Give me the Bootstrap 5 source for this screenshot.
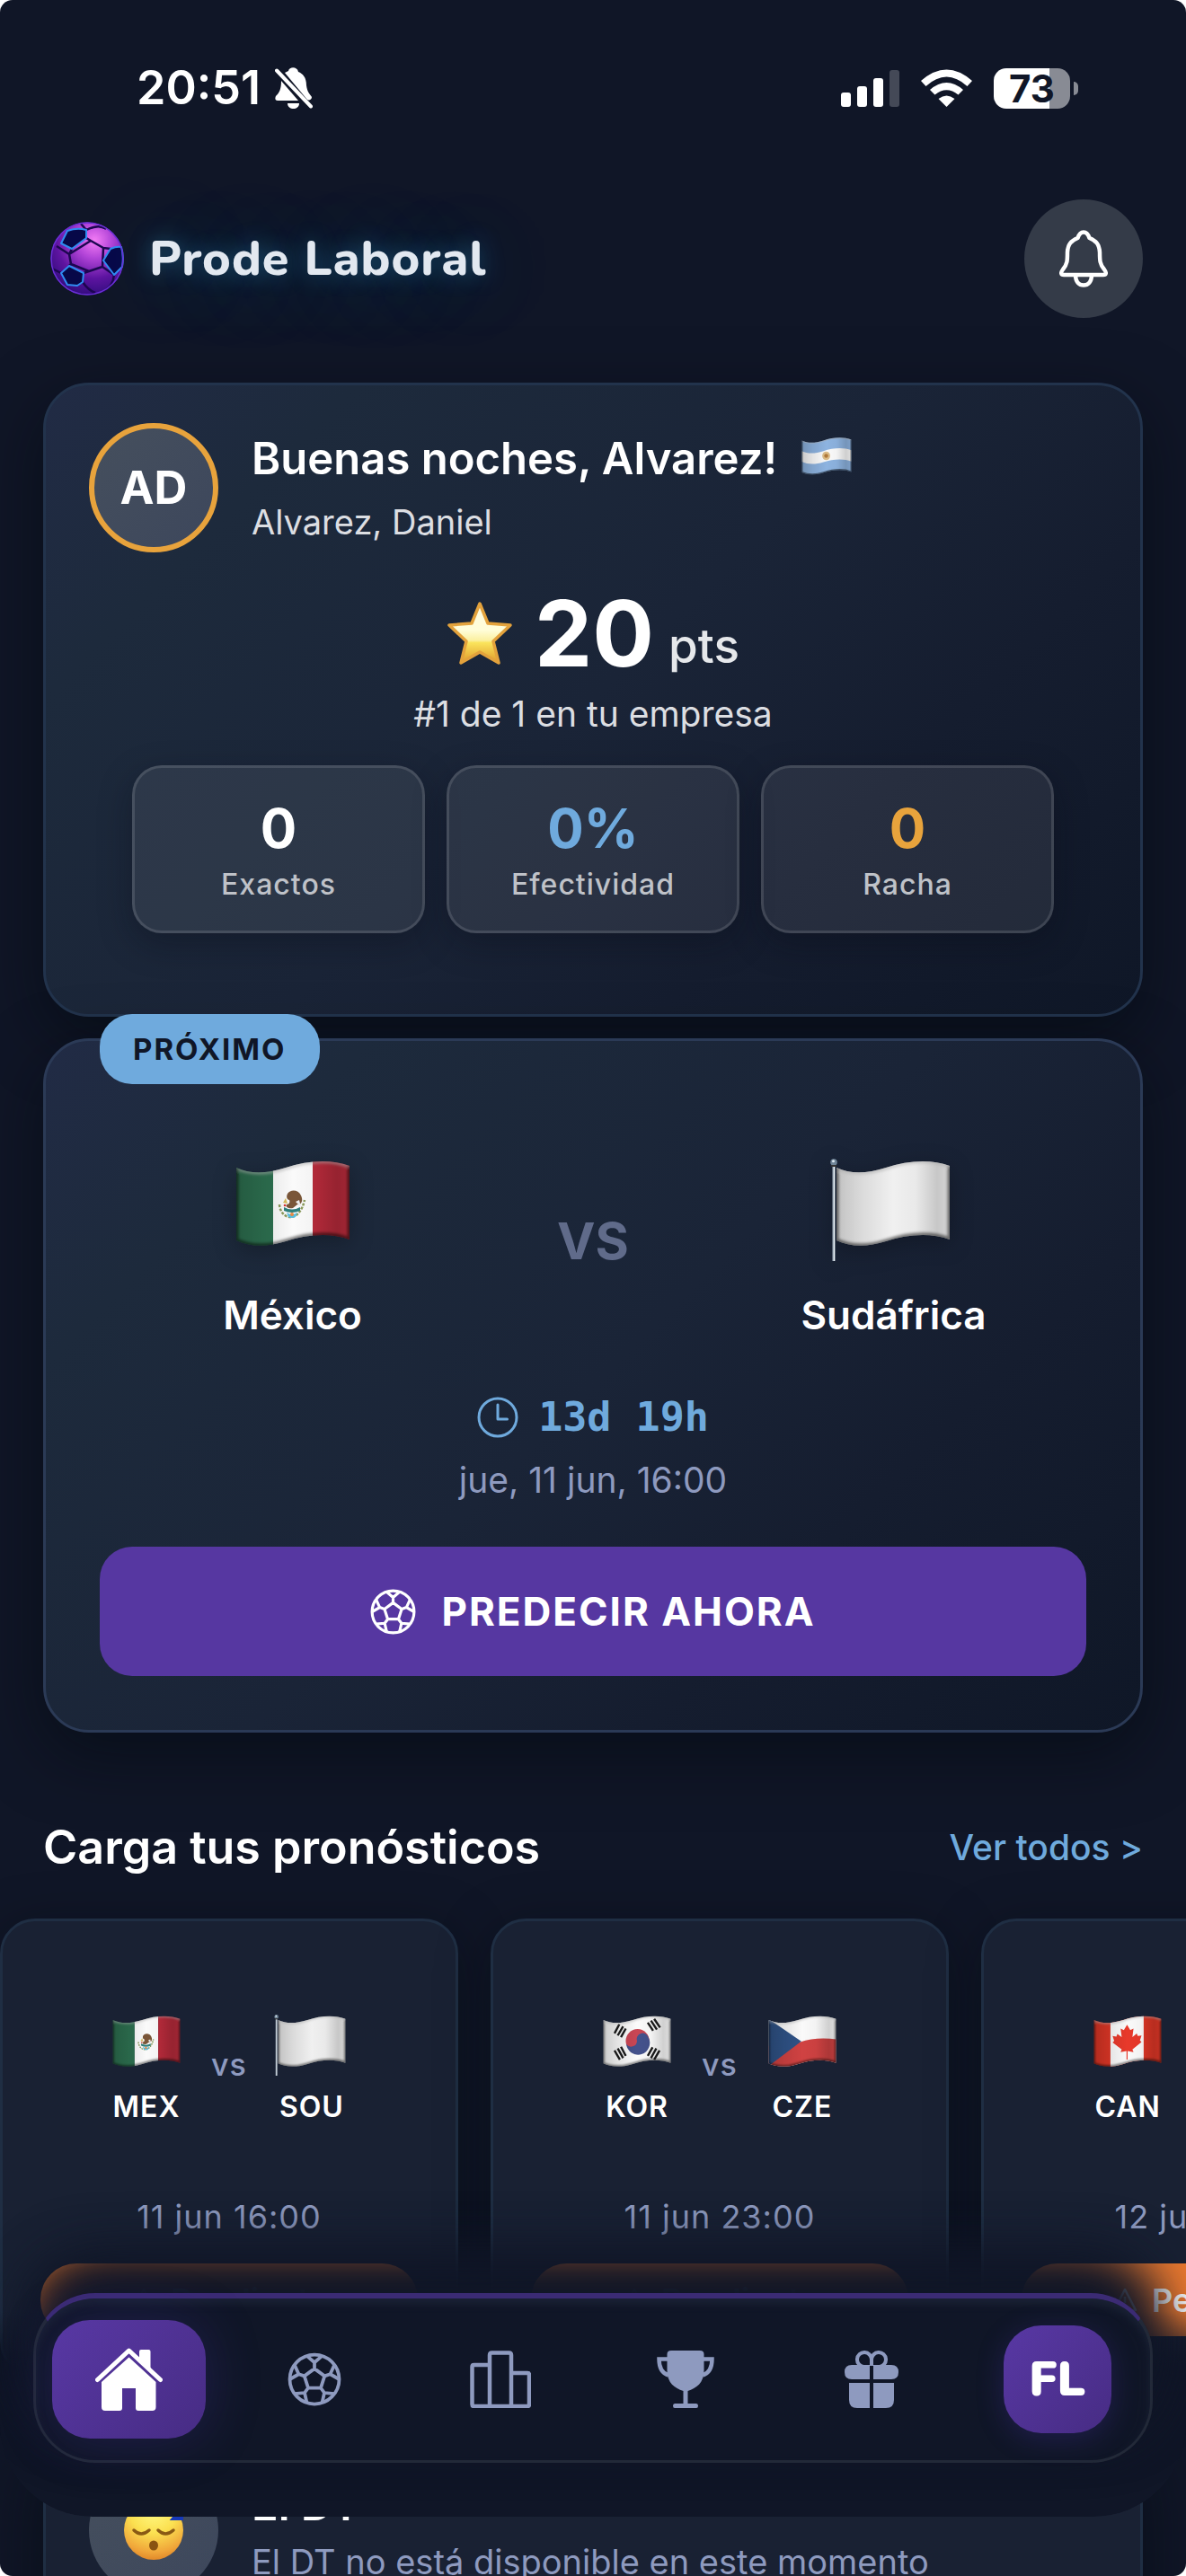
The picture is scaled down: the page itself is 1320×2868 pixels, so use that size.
<!DOCTYPE html>
<html lang="es">
<head>
<meta charset="utf-8">
<meta name="viewport" content="width=device-width, initial-scale=1">
<title>Prode Laboral</title>
<link href="https://cdn.jsdelivr.net/npm/bootstrap@5.3.0/dist/css/bootstrap.min.css" rel="stylesheet">
<style>
:root{--night:#101627;--sky:#6faadd;--amber:#e8a33c;--muted:#8e9abf;--violet:#5637a1}
body{background:#fff;font-family:Inter,"Liberation Sans",sans-serif;color:#fff}
.app{background:var(--night);border-radius:14px}
.status{height:196px;padding:0 120px 0 152px;font-size:52px;font-weight:600;line-height:60px}
.batt{width:85px;height:45px;border-radius:14px;background:linear-gradient(to right,#fff 73%,#888b94 73%);color:var(--night);font-size:42px;font-weight:700;line-height:45px}
.batt-tip{width:5px;height:15px;border-radius:0 8px 8px 0;background:#888b94}
.topbar{padding:26px 48px 0 56px}
.brand-name{font-family:Nunito,Lato,sans-serif;font-weight:800;font-size:54px;line-height:72px;letter-spacing:1px;color:#e2e8f0;text-shadow:0 0 24px rgba(56,189,248,.35),0 6px 90px rgba(56,189,248,.35)}
.bell-btn{width:132px;height:132px;background:#343b48}
.panel{border:3px solid #22334c;border-radius:51px;background:linear-gradient(135deg,#212b45 0%,#1d2a3c 18%,#1a2437 50%,#151d2f 72%,#0f1727 100%);box-shadow:0 24px 72px rgba(0,8,12,.5)}
.hero{margin-top:72px;padding:42px 48px 90px}
.avatar{width:144px;height:144px;flex:none;background:linear-gradient(135deg,#454f5d,#3d475c);font-size:51px;font-weight:700}
.avatar-ring{border:6px solid var(--amber)}
.who{margin-left:37px}
.greet{font-size:49px;line-height:60px;font-weight:600}
.body-sub{font-size:38px;line-height:48px}
.who .body-sub{margin-top:16px}
.body-txt{font-size:39px;line-height:48px}
.dim{color:#dcdee2}
.score{height:108px;margin-top:36px;gap:16px}
.score-num{font-size:102px;line-height:108px;font-weight:700}
.score-unit{font-size:53px;line-height:80px;font-weight:500;color:#e6e8eb}
.stats{margin:33px 48px 0;gap:24px}
.stat{border:3px solid rgba(255,255,255,.12);border-radius:33px;background:rgba(255,255,255,.08);box-shadow:0 12px 36px rgba(10,12,24,.35);padding:31px 0 27px}
.stat-num{font-size:60px;line-height:72px;font-weight:700}
.stat-lbl{font-size:32px;line-height:48px;font-weight:500;letter-spacing:1px;color:#bfc2c8;padding-top:3px}
.next{margin-top:24px;padding:131px 60px 60px;border-color:#2b3a56}
.chip{top:-30px;left:60px;background:var(--sky);color:var(--night);border-radius:36px;padding:0 37px;font-size:33px;line-height:78px;font-weight:700;letter-spacing:2px}
.flag-lg{width:140px;height:114px;filter:drop-shadow(0 6px 12px rgba(0,0,0,.25))}
.flag-sm{width:84px;height:68px}
.team{font-size:44px;line-height:60px;margin-top:30px;font-weight:600}
.versus{font-size:57px;line-height:60px;font-weight:700;color:#606b8a;padding:0 80px 20px}
.count{font-family:"DejaVu Sans Mono",monospace;font-weight:700;font-size:45px;line-height:60px;color:var(--sky);margin-top:54px;gap:22px}
.when{color:var(--muted);margin-top:16px}
.cta{height:144px;margin-top:50px;border-radius:36px;background:var(--violet);color:#fff;font-size:44px;font-weight:700;letter-spacing:2px;gap:28px;border:0}
.sec-head{margin:92px 48px 43px}
.sec-title{font-size:52px;line-height:72px;font-weight:600}
.sec-link{font-size:39px;font-weight:500;color:var(--sky)}
.strip{gap:36px}
.fixture{width:510px;border:3px solid #1f2e43;border-radius:39px;background:#192133;box-shadow:0 12px 60px rgba(0,8,12,.35);padding:104px 42px 42px}
.code{font-size:32px;line-height:42px;margin-top:14px;font-weight:600;letter-spacing:1px}
.vs-sm{font-size:34px;line-height:36px;font-weight:500;color:var(--muted);padding-bottom:12px;letter-spacing:1px}
.pair{gap:30px}
.date-sm{font-size:36px;line-height:48px;color:var(--muted);margin-top:77px;letter-spacing:1px}
.pend{height:81px;margin-top:28px;border:0;border-radius:40px;background:#ec7a30;color:#fff;font-size:36px;font-weight:600;gap:15px}
.coach{margin-top:54px;padding:42px 48px 60px;background:#192133;border-color:#1f2e43}
.coach .when{margin-top:9px}
.dock{padding:0 37px 60px;border-radius:0 0 103px 103px;background:linear-gradient(to bottom,rgba(16,22,39,0) 20px,var(--night) 80px);clip-path:inset(-300px 0 0 0 round 0 0 103px 103px);bottom:66px!important}
.pill{height:189px;border:3px solid #222938;border-top:6px solid #3b2b74;border-radius:69px;background:var(--night);box-shadow:0 -42px 60px var(--night),0 -30px 60px var(--night),inset 0 6px 9px #1a2235}
.tab-home{width:171px;height:132px;border-radius:42px;background:linear-gradient(135deg,#5838a4,#472c84);box-shadow:0 0 60px rgba(80,56,190,.25)}
.tab-me{width:120px;height:120px;border-radius:42px;background:linear-gradient(135deg,#5838a4,#472c84);box-shadow:0 6px 30px rgba(80,56,190,.25);font-family:Nunito,Lato,sans-serif;font-size:54px;font-weight:900}
.tab-ico{color:var(--muted)}
svg{flex:none;display:block}
</style>
</head>
<body>
<svg width="0" height="0" class="position-absolute" aria-hidden="true">
<defs>
<clipPath id="cloth"><path d="M7 10C22 17 40 17 62 10C86 2 112 0 133 8V90C112 82 86 84 62 92C40 99 22 98 7 91Z"/></clipPath>
<linearGradient id="fold" x1="0" x2="1" y1="0" y2="0"><stop offset="0" stop-color="#000" stop-opacity=".22"/><stop offset=".25" stop-color="#000" stop-opacity=".09"/><stop offset=".5" stop-color="#000" stop-opacity="0"/><stop offset=".68" stop-color="#000" stop-opacity=".03"/><stop offset=".85" stop-color="#000" stop-opacity=".17"/><stop offset="1" stop-color="#000" stop-opacity=".08"/></linearGradient>
<filter id="soft"><feGaussianBlur stdDeviation="1.6"/></filter>
<symbol id="shade" viewBox="0 0 140 114"><g clip-path="url(#cloth)"><rect width="140" height="114" fill="url(#fold)"/><g filter="url(#soft)" fill="none" stroke-width="5"><path d="M7 10C22 17 40 17 62 10C86 2 112 0 133 8" stroke="#aaa" stroke-opacity=".5"/><path d="M133 8V90C112 82 86 84 62 92C40 99 22 98 7 91V10" stroke="#000" stroke-opacity=".5"/></g></g></symbol>
<symbol id="f-mx" viewBox="0 0 140 114"><g clip-path="url(#cloth)"><path fill="#2d7050" d="M0 0h48v114H0z"/><path fill="#fafafa" d="M48 0h44v114H48z"/><path fill="#b52a3a" d="M92 0h48v114H92z"/><path d="M55 51c1 17 22 22 28-5" fill="none" stroke="#8b9a5b" stroke-width="2.5" stroke-dasharray="3 1.5"/><path d="M64 39c3-5 12-5 15 2c3 6 0 11-4 10l-5 4c-4 1-9-1-7-4c3 0 4-3 3-5c-2 0-4-3-2-7z" fill="#7a5638"/><path d="M62 44l-3 5 5 1z" fill="#d8bd5a"/><path d="M73 48l6 6-2-8z" fill="#eee"/><path d="M60 54q9 5 18 0v4q-9 4-18 0z" fill="#2e7f7c"/><path d="M63 60q6 4 12 0l-2 5q-4 2-8 0z" fill="#58bde0"/><circle cx="69" cy="62" r="2" fill="#e98842"/><circle cx="61" cy="52" r="1.3" fill="#d33"/></g><use href="#shade"/></symbol>
<symbol id="f-white" viewBox="0 0 140 114"><g clip-path="url(#cloth)"><path fill="#f0f0f0" d="M0 0h140v114H0z"/></g><use href="#shade"/><path d="M2.500 7h3v107h-3z" fill="#a9b6c3"/><path d="M4 7h1v107H4z" fill="#eef4f8"/><circle cx="4" cy="4" r="3.800" fill="#6f8497"/><circle cx="3.500" cy="2.800" r="1.500" fill="#dfeaf2"/><path d="M1 7h6v2H1z" fill="#333"/></symbol>
<symbol id="f-ar" viewBox="0 0 140 114"><g clip-path="url(#cloth)"><path fill="#8db3e0" d="M0 0h140v114H0z"/><path fill="#fafafa" d="M7 37C22 44 40 44 62 37C86 29 112 27 133 35V63C112 55 86 57 62 65C40 72 22 71 7 64Z"/><ellipse cx="69" cy="49" rx="10" ry="11" fill="#dcbc87"/><circle cx="69" cy="49" r="5" fill="#b0793a"/></g><use href="#shade"/></symbol>
<symbol id="f-kr" viewBox="0 0 140 114"><g clip-path="url(#cloth)"><path fill="#fbfbfb" d="M0 0h140v114H0z"/><circle cx="71" cy="49" r="22" fill="#c94654"/><path d="M50 55a11 11 0 0 0 20-6a11 11 0 0 1 21-7a22 22 0 1 1-41 13z" fill="#44528c"/><g stroke="#1b1b1b" stroke-width="4"><path d="M28 35l9-17M34 39l10-17M40 42l9-16M90 15l10 15M96 11l11 17M102 8l11 16M28 67l10 17M34 63l10 18M40 60l9 17M90 77l9-16M96 81l10-18M102 84l10-17"/></g></g><use href="#shade"/></symbol>
<symbol id="f-cz" viewBox="0 0 140 114"><g clip-path="url(#cloth)"><path fill="#fafafa" d="M0 0h140v114H0z"/><path fill="#d04242" d="M7 58C22 59 40 58 66 51C86 44 112 42 140 47V114H7Z"/><path fill="#2f5286" d="M7 8L68 50L7 96Z"/></g><use href="#shade"/></symbol>
<symbol id="f-ca" viewBox="0 0 140 114"><g clip-path="url(#cloth)"><path fill="#dd3626" d="M0 0h140v114H0z"/><path fill="#fafafa" d="M38 0h62v114H38z"/><path fill="#e8392b" d="M69 19l6 10 6-3-2 16 8-7 2 5 7-1-3 9 3 3-17 14 2 5-11-2v16h-2V68l-11 2 2-5-17-13 3-3-3-9 7 1 2-5 8 6-2-16 6 3z"/></g><use href="#shade"/></symbol>
<symbol id="ball" viewBox="0 0 48 48"><g transform="translate(24 24)" fill="none" stroke="currentColor" stroke-width="3" stroke-linejoin="round"><circle r="22"/><path d="M0-9.500L9-2.900 5.600 7.700H-5.600L-9-2.900ZM0-9.500V-15M9-2.900L14-4.600M5.600 7.700L8.800 12M-5.600 7.700L-8.800 12M-9-2.900L-14-4.600M-6.800-20.900L0-15 6.800-20.900M17.800-12.900L14-4.600 22 0M17.800 12.900L8.800 12 6.800 20.900M-6.800 20.900L-8.800 12-17.800 12.900M-22 0L-14-4.600-17.800-12.900"/></g></symbol>
<symbol id="warn" viewBox="0 0 30 30"><path d="M15 3L27 26H3zM15 11v7M15 21v2" fill="none" stroke="currentColor" stroke-width="2.500" stroke-linejoin="round"/></symbol>
<radialGradient id="orb" cx=".6" cy=".25" r=".8"><stop offset="0" stop-color="#f57df5"/><stop offset=".3" stop-color="#b345d8"/><stop offset=".65" stop-color="#5e14a0"/><stop offset="1" stop-color="#2c0c78"/></radialGradient>
<linearGradient id="gold" x1="0" x2="0" y1="0" y2="1"><stop offset="0" stop-color="#fffbe0"/><stop offset=".45" stop-color="#fffdd8"/><stop offset=".62" stop-color="#fbf0a0"/><stop offset=".66" stop-color="#fae45c"/><stop offset="1" stop-color="#e09a2a"/></linearGradient>
<radialGradient id="face" cx=".5" cy=".15" r=".9"><stop offset="0" stop-color="#fffb86"/><stop offset=".45" stop-color="#fbe050"/><stop offset=".8" stop-color="#f0a63a"/><stop offset="1" stop-color="#dd7f24"/></radialGradient>
</defs>
</svg>

<div class="app vh-100 overflow-hidden position-relative">
  <div class="status d-flex align-items-center justify-content-between">
    <div class="d-flex align-items-center gap-3">
      <span>20:51</span>
      <svg width="42" height="46" viewBox="0 0 42 46" fill="#fff"><path d="M11 6L36 36C38 37 41 36 41 33C38 29 36 27 35 20C35 11 31 7 26 5C25-1 16-1 15 4Z"/><path d="M7 15L26 37H3C0 37 0 34 1 32C5 28 7 24 7 15Z"/><path d="M14 40h13c0 8-13 8-13 0z"/><path d="M2 3.500L40 43.500" stroke="#fff" stroke-width="4" stroke-linecap="round"/></svg>
    </div>
    <div class="d-flex align-items-center">
      <svg width="65" height="42" viewBox="0 0 65 42" fill="#fff"><rect y="26" width="11" height="16" rx="3"/><rect x="18" y="19" width="11" height="23" rx="3"/><rect x="36" y="10" width="11" height="32" rx="3"/><rect x="54" y="1" width="11" height="41" rx="3" fill="#444957"/></svg>
      <svg class="ms-4" width="57" height="42" viewBox="0 0 57 42" fill="#fff"><path d="M0 13Q28.500-12 57 13L51.500 19Q28.500-2 5.500 19Z"/><path d="M10 23Q28.500 7 47 23L41.500 28.500Q28.500 18 15.500 28.500Z"/><path d="M19.500 33Q28.500 26 37.500 33L28.500 42Z"/></svg>
      <div class="batt text-center ms-4">73</div><div class="batt-tip ms-1"></div>
    </div>
  </div>

  <header class="topbar d-flex align-items-center justify-content-between">
    <div class="d-flex align-items-center gap-4">
      <svg width="82" height="82" viewBox="0 0 82 82"><circle cx="41" cy="41" r="40.500" fill="url(#orb)"/><g fill="none" stroke="#1c0750" stroke-width="2.500" stroke-linejoin="round"><path d="M21 36L45 21 59 29 58 50 43 55 23 47ZM45 21L40 18M59 29L67 30M58 50L71 59M43 55L37 57M23 47L21 49M21 36L24 30M21 36L7 27M40 9Q54 2 62 8M71 59Q70 72 58 78M36 67Q42 76 50 79M12 57L2 52M40 9L34 2"/></g><g fill="#070848" stroke="#2f8cf2" stroke-width="2" stroke-linejoin="round"><path d="M12 24L19 10Q30 6 40 9L40 18 24 30Z"/><path d="M59 43L67 30Q74 27 79 28Q82 38 80 50L71 59Z"/><path d="M12 57L21 49 37 57 36 67 30 71 19 70Z"/></g><circle cx="41" cy="41" r="40" fill="none" stroke="#6b2fd8" stroke-width="1.500"/></svg>
      <span class="brand-name ms-1">Prode Laboral</span>
    </div>
    <button class="bell-btn btn rounded-circle border-0 p-0 d-flex align-items-center justify-content-center" aria-label="Notificaciones">
      <svg width="54" height="64" viewBox="0 0 54 64" fill="none" stroke="#fff" stroke-width="4.500" stroke-linejoin="round"><path d="M27 2.500C23 2.500 21.500 6 20.500 9C13 12 9.500 16 9 25C9 34 9 38 4 44C1 48 2 50 5 50H49C52 50 53 48 50 44C45 38 45 34 45 25C44.500 16 41 12 33.500 9C32.500 6 31 2.500 27 2.500Z"/><path d="M18 50c0 8 4 11.500 9 11.500s9-3.500 9-11.500"/></svg>
    </button>
  </header>

  <section class="panel hero mx-5">
    <div class="d-flex align-items-center">
      <div class="avatar avatar-ring rounded-circle d-flex align-items-center justify-content-center">AD</div>
      <div class="who">
        <div class="greet d-flex align-items-center gap-4">Buenas noches, Alvarez! <svg width="62" height="50"><use href="#f-ar"/></svg></div>
        <div class="body-sub dim">Alvarez, Daniel</div>
      </div>
    </div>
    <div class="score d-flex justify-content-center align-items-end">
      <svg class="align-self-center me-2" width="74" height="72" viewBox="0 0 74 72"><path d="M37 3L46 25 71 27 52 45 58 69 37 57 16 69 22 45 3 27 28 25Z" fill="url(#gold)" stroke="#e3a23c" stroke-width="3.500" stroke-linejoin="round"/></svg>
      <span class="score-num">20</span><span class="score-unit">pts</span>
    </div>
    <div class="body-txt dim text-center mt-2 pt-1">#1 de 1 en tu empresa</div>
    <div class="stats d-flex text-center">
      <div class="stat flex-fill w-100"><div class="stat-num">0</div><div class="stat-lbl">Exactos</div></div>
      <div class="stat flex-fill w-100"><div class="stat-num" style="color:var(--sky)">0%</div><div class="stat-lbl">Efectividad</div></div>
      <div class="stat flex-fill w-100"><div class="stat-num" style="color:var(--amber)">0</div><div class="stat-lbl">Racha</div></div>
    </div>
  </section>

  <section class="panel next mx-5 position-relative">
    <span class="chip position-absolute">PRÓXIMO</span>
    <div class="d-flex align-items-center text-center">
      <div class="flex-fill w-50 d-flex flex-column align-items-center"><svg class="flag-lg"><use href="#f-mx"/></svg><div class="team">México</div></div>
      <div class="versus">VS</div>
      <div class="flex-fill w-50 d-flex flex-column align-items-center"><svg class="flag-lg"><use href="#f-white"/></svg><div class="team">Sudáfrica</div></div>
    </div>
    <div class="count d-flex justify-content-center align-items-center">
      <svg width="46" height="46" viewBox="0 0 46 46" fill="none" stroke="#6faadd" stroke-width="3" stroke-linecap="round" stroke-linejoin="round"><circle cx="23" cy="23" r="21"/><path d="M23 9v16h10.500"/></svg>
      <span>13d 19h</span>
    </div>
    <div class="body-txt when text-center">jue, 11 jun, 16:00</div>
    <button class="cta btn w-100 d-flex align-items-center justify-content-center"><svg width="51" height="51"><use href="#ball"/></svg>PREDECIR AHORA</button>
  </section>

  <div class="sec-head d-flex align-items-center justify-content-between">
    <h2 class="sec-title mb-0">Carga tus pronósticos</h2>
    <a class="sec-link text-decoration-none" href="#">Ver todos &gt;</a>
  </div>

  <div class="strip d-flex">
    <article class="fixture flex-shrink-0">
      <div class="pair d-flex justify-content-center align-items-center text-center">
        <div><svg class="flag-sm"><use href="#f-mx"/></svg><div class="code">MEX</div></div><div class="vs-sm">vs</div><div><svg class="flag-sm"><use href="#f-white"/></svg><div class="code">SOU</div></div>
      </div>
      <div class="date-sm text-center">11 jun 16:00</div>
      <button class="pend w-100 d-flex align-items-center justify-content-center"><svg width="30" height="30"><use href="#warn"/></svg>Pendiente</button>
    </article>
    <article class="fixture flex-shrink-0">
      <div class="pair d-flex justify-content-center align-items-center text-center">
        <div><svg class="flag-sm"><use href="#f-kr"/></svg><div class="code">KOR</div></div><div class="vs-sm">vs</div><div><svg class="flag-sm"><use href="#f-cz"/></svg><div class="code">CZE</div></div>
      </div>
      <div class="date-sm text-center">11 jun 23:00</div>
      <button class="pend w-100 d-flex align-items-center justify-content-center"><svg width="30" height="30"><use href="#warn"/></svg>Pendiente</button>
    </article>
    <article class="fixture flex-shrink-0">
      <div class="pair d-flex justify-content-center align-items-center text-center">
        <div><svg class="flag-sm"><use href="#f-ca"/></svg><div class="code">CAN</div></div><div class="vs-sm">vs</div><div><svg class="flag-sm"><use href="#f-white"/></svg><div class="code">BOS</div></div>
      </div>
      <div class="date-sm text-center">12 jun 16:00</div>
      <button class="pend w-100 d-flex align-items-center justify-content-center"><svg width="30" height="30"><use href="#warn"/></svg>Pendiente</button>
    </article>
  </div>

  <section class="panel coach mx-5">
    <div class="d-flex align-items-center">
      <div class="avatar rounded-circle d-flex align-items-center justify-content-center">
        <svg width="68" height="68" viewBox="0 0 68 68"><circle cx="34" cy="34" r="33" fill="url(#face)"/><path d="M12 34q8 8 17 0M39 34q8 8 17 0" fill="none" stroke="#8a5a14" stroke-width="3.500" stroke-linecap="round"/><ellipse cx="34" cy="51" rx="5" ry="5.500" fill="#8a5312"/><path d="M56 9h10L56 21h11" fill="none" stroke="#1638b8" stroke-width="4"/></svg>
      </div>
      <div class="who">
        <div class="greet">El DT</div>
        <div class="body-sub when">El DT no está disponible en este momento</div>
      </div>
    </div>
  </section>

  <nav class="dock position-absolute start-0 end-0 bottom-0">
    <div class="pill d-flex align-items-center text-center">
      <a href="#" class="flex-fill w-100 d-flex justify-content-center" aria-label="Inicio"><span class="tab-home d-flex align-items-center justify-content-center"><svg width="75" height="70" viewBox="0 0 75 70" fill="#fff"><path d="M2.500 35.500L37.500 3 72.500 35.500" fill="none" stroke="#fff" stroke-width="5" stroke-linecap="round" stroke-linejoin="round"/><path d="M49 4q0-2 2-2h8.500q2 0 2 2v20L49 13z"/><path d="M37.500 10.500L67.500 38V66q0 4-4 4H48q-3 0-3-3V45H30v22q0 3-3 3H11q-4 0-4-4V38z"/></svg></span></a>
      <a href="#" class="tab-ico flex-fill w-100 d-flex justify-content-center" aria-label="Partidos"><svg width="60" height="60"><use href="#ball"/></svg></a>
      <a href="#" class="tab-ico flex-fill w-100 d-flex justify-content-center" aria-label="Posiciones"><svg width="68" height="64" viewBox="0 0 68 64" fill="none" stroke="currentColor" stroke-width="4.500" stroke-linejoin="round"><path d="M22 16H4.500Q2.500 16 2.500 18V60Q2.500 62 4.500 62H64Q66 62 66 60V27Q66 25 64 25H46M22 62V5Q22 2.500 24.500 2.500H43.500Q46 2.500 46 5V62"/></svg></a>
      <a href="#" class="tab-ico flex-fill w-100 d-flex justify-content-center" aria-label="Torneos"><svg width="64" height="64" viewBox="0 0 64 64" fill="currentColor"><path d="M16 0H48Q52.500 0 52.500 4V22C52.500 36 44 42 34.500 45V59H44Q46 59 46 61.500T44 64H20Q18 64 18 61.500T20 59H29.500V45C20 42 11.500 36 11.500 22V4Q11.500 0 16 0Z"/><path d="M12 9.500H2.500C2.500 18 5 25 13 27.500M52 9.500H61.500C61.500 18 59 25 51 27.500" fill="none" stroke="currentColor" stroke-width="4.500"/></svg></a>
      <a href="#" class="tab-ico flex-fill w-100 d-flex justify-content-center" aria-label="Premios"><svg width="60" height="64" viewBox="0 0 60 64" fill="currentColor"><path d="M28 16V32H8Q0 32 0 24T8 16ZM32 16V32H52Q60 32 60 24T52 16ZM5 36H28V64H14Q5 64 5 55ZM32 36H55V55Q55 64 46 64H32Z"/><path d="M30 17V10A8 8 0 1 0 21 18M30 10A8 8 0 1 1 39 18" fill="none" stroke="currentColor" stroke-width="4"/></svg></a>
      <a href="#" class="flex-fill w-100 d-flex justify-content-center text-decoration-none text-white"><span class="tab-me d-flex align-items-center justify-content-center">FL</span></a>
    </div>
  </nav>
</div>
<script src="https://cdn.jsdelivr.net/npm/bootstrap@5.3.0/dist/js/bootstrap.bundle.min.js"></script>
</body>
</html>
